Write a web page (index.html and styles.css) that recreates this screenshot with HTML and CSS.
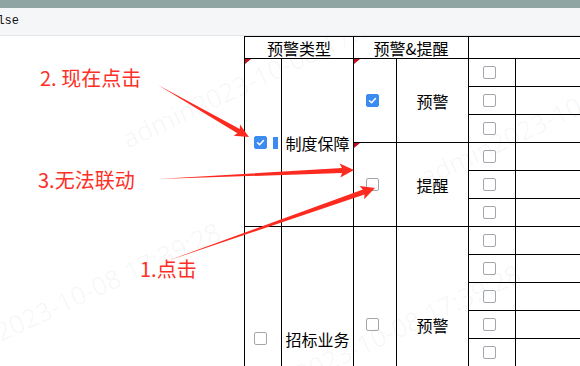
FILE: index.html
```html
<!DOCTYPE html>
<html lang="zh-CN">
<head>
<meta charset="utf-8">
<title>预警配置</title>
<link rel="stylesheet" href="styles.css">
</head>
<body>
<div class="frame">
  <div class="topstrip"></div>
  <div class="toolbar"><code class="expr">false</code></div>
  <div class="content">
    <table class="grid">
      <colgroup>
        <col class="c1"><col class="c2"><col class="c3"><col class="c4"><col class="c5"><col class="c6">
      </colgroup>
      <thead>
        <tr><th colspan="2">预警类型</th><th colspan="2">预警&amp;提醒</th><th colspan="2"></th></tr>
      </thead>
      <tbody>
        <tr>
          <td rowspan="6" class="chk mark"><span class="cb on"><svg viewBox="0 0 13 13"><polyline points="3,6.8 5.4,9.2 10,4.2"/></svg></span><span class="caret"></span></td>
          <td rowspan="6" class="label">制度保障</td>
          <td rowspan="3" class="chk mark"><span class="cb on"><svg viewBox="0 0 13 13"><polyline points="3,6.8 5.4,9.2 10,4.2"/></svg></span></td>
          <td rowspan="3" class="kind">预警</td>
          <td class="chk"><span class="cb"></span></td><td></td>
        </tr>
        <tr><td class="chk"><span class="cb"></span></td><td></td></tr>
        <tr><td class="chk"><span class="cb"></span></td><td></td></tr>
        <tr>
          <td rowspan="3" class="chk mark"><span class="cb"></span></td>
          <td rowspan="3" class="kind">提醒</td>
          <td class="chk"><span class="cb"></span></td><td></td>
        </tr>
        <tr><td class="chk"><span class="cb"></span></td><td></td></tr>
        <tr><td class="chk"><span class="cb"></span></td><td></td></tr>
        <tr>
          <td rowspan="8" class="chk"><span class="cb"></span></td>
          <td rowspan="8" class="label">招标业务</td>
          <td rowspan="7" class="chk"><span class="cb"></span></td>
          <td rowspan="7" class="kind">预警</td>
          <td class="chk"><span class="cb"></span></td><td></td>
        </tr>
        <tr><td class="chk"><span class="cb"></span></td><td></td></tr>
        <tr><td class="chk"><span class="cb"></span></td><td></td></tr>
        <tr><td class="chk"><span class="cb"></span></td><td></td></tr>
        <tr><td class="chk"><span class="cb"></span></td><td></td></tr>
        <tr><td class="chk"><span class="cb"></span></td><td></td></tr>
        <tr><td class="chk"><span class="cb"></span></td><td></td></tr>
        <tr>
          <td class="chk"><span class="cb"></span></td>
          <td class="kind">提醒</td>
          <td class="chk"><span class="cb"></span></td><td></td>
        </tr>
      </tbody>
    </table>
  </div>

  <div class="wm wm1">admin2023-10-08 17:39:28</div>
  <div class="wm wm2">admin2023-10-08 17:39:28</div>
  <div class="wm wm3">admin2023-10-08 17:39:28</div>
  <div class="wm wm4">admin2023-10-08 17:39:28</div>

  <svg class="arrows" width="580" height="366" viewBox="0 0 580 366">
    <polygon points="158,85 239.8,128.9 240,124.5 249,137 233.6,135.7 237.4,133.2"/>
    <polygon points="158,179 341.9,168.05 339.7,163.6 354,170 340.3,177.6 342.1,173.05"/>
    <polygon points="167,261 362.9,189.6 359.5,186 375,188 364.1,199.2 364.5,194.4"/>
  </svg>

  <div class="note n2">2. 现在点击</div>
  <div class="note n3">3.无法联动</div>
  <div class="note n1">1.点击</div>
</div>
</body>
</html>
```

FILE: styles.css
```css
html, body {
  margin: 0;
  padding: 0;
  background: #fff;
}

.frame {
  position: relative;
  width: 580px;
  height: 366px;
  overflow: hidden;
  font-family: "Noto Sans CJK SC", "Noto Sans", sans-serif;
  color: #000;
}

.topstrip {
  position: relative;
  z-index: 3;
  height: 8px;
  background: #8fa5a4;
}

.toolbar {
  position: relative;
  z-index: 3;
  height: 27px;
  background: #f5f6f8;
  border-bottom: 1px solid #e3e5e8;
  overflow: hidden;
}

.expr {
  display: block;
  margin-left: -17px;
  font: 12px/27px "Liberation Mono", monospace;
  color: #111;
}

.content {
  padding-left: 244px;
}

.grid {
  border-collapse: collapse;
  table-layout: fixed;
  width: 391px;
  font-size: 16px;
}

.c1 { width: 37px; }
.c2 { width: 72px; }
.c3 { width: 43px; }
.c4 { width: 72px; }
.c5 { width: 47px; }
.c6 { width: 120px; }

.grid th,
.grid td {
  border: 1px solid #000;
  padding: 0;
  position: relative;
  font-weight: normal;
  text-align: center;
  vertical-align: middle;
  white-space: nowrap;
}

.grid thead tr { height: 22px; }
.grid tbody tr { height: 28px; }

.grid th { line-height: 20px; }

.kind {
  padding-left: 10px;
}

.chk {
  line-height: 0;
}

.cb {
  display: inline-block;
  box-sizing: border-box;
  width: 13px;
  height: 13px;
  margin-right: 6px;
  border: 1px solid #a3a7ad;
  border-radius: 2px;
  background: #fff;
  vertical-align: middle;
}

.cb.on {
  background: #3b8bf0;
  border-color: #3b8bf0;
}

.cb svg {
  display: block;
  width: 11px;
  height: 11px;
  margin: 0;
}

.cb svg polyline {
  fill: none;
  stroke: #fff;
  stroke-width: 1.8;
  stroke-linecap: round;
  stroke-linejoin: round;
}

.caret {
  position: absolute;
  left: 28px;
  top: 50%;
  width: 5px;
  height: 12px;
  margin-top: -6px;
  background: #3b8bf0;
}

.mark::before {
  content: "";
  position: absolute;
  left: 0;
  top: 0;
  border-top: 5px solid #c0111b;
  border-right: 6px solid transparent;
}

.wm {
  position: absolute;
  z-index: 1;
  font: 26px/26px "Open Sans", sans-serif;
  color: rgba(0, 0, 0, 0.04);
  white-space: nowrap;
  transform-origin: 0 21px;
  transform: rotate(-25deg);
  pointer-events: none;
}

.wm1 { left: 127px; top: 126px; }
.wm2 { left: 425px; top: 164px; }
.wm3 { left: -70px; top: 352px; }
.wm4 { left: 230px; top: 394px; }

.arrows {
  position: absolute;
  z-index: 4;
  left: 0;
  top: 0;
  pointer-events: none;
}

.arrows polygon {
  fill: #fd2a20;
}

.note {
  position: absolute;
  z-index: 4;
  font-size: 20px;
  line-height: 20px;
  color: #fd2f26;
  white-space: nowrap;
}

.n2 { left: 40px; top: 68px; }
.n3 { left: 38px; top: 170px; }
.n1 { left: 140px; top: 259px; }
```
